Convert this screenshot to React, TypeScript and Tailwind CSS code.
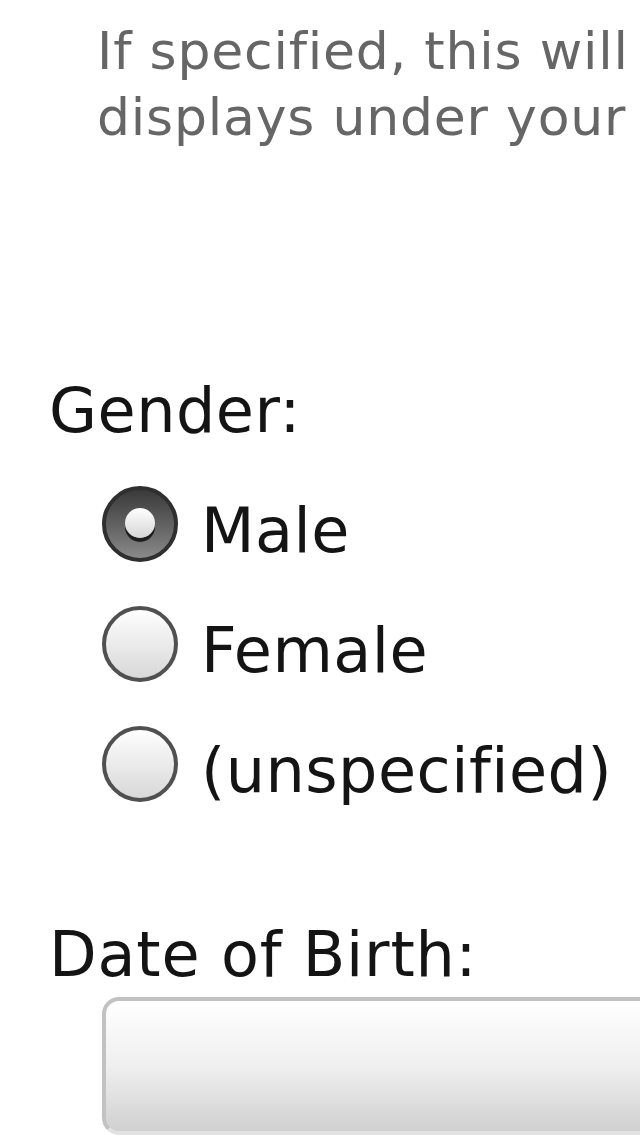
import React from "react";

const font = { fontFamily: '"DejaVu Sans", Verdana, sans-serif' };

function Radio({ checked }: { checked?: boolean }) {
  if (checked) {
    return (
      <div className="flex h-[76px] w-[76px] shrink-0 items-center justify-center rounded-full border-4 border-[#2f2f2f] bg-linear-to-b from-[#3a3a3a] to-[#8a8a8a]">
        <div className="mb-[2px] h-[30px] w-[30px] rounded-full bg-linear-to-b from-[#ffffff] to-[#d6d6d6] shadow-[0_4px_0_#1e1e1e]" />
      </div>
    );
  }
  return (
    <div className="h-[76px] w-[76px] shrink-0 rounded-full border-4 border-[#505050] bg-linear-to-b from-[#fefefe] to-[#d8d8d8]" />
  );
}

function Row({ label, checked }: { label: string; checked?: boolean }) {
  return (
    <div className="flex h-[120px] items-center pl-[102px]">
      <Radio checked={checked} />
      <span className="ml-[23px] mt-[13px] whitespace-nowrap text-[62px] leading-[72px] tracking-[0.5px] text-[#141414]">
        {label}
      </span>
    </div>
  );
}

export default function App() {
  return (
    <div className="relative h-[1136px] w-[640px] overflow-hidden bg-white" style={font}>
      <div className="pl-[97px] pt-[18px] text-[52px] leading-[66px] tracking-[0.8px] text-[#666666]">
        <div className="whitespace-nowrap">If specified, this will</div>
        <div className="whitespace-nowrap">displays under your</div>
      </div>

      <div className="mt-[225px] pl-[49px] text-[62px] leading-[72px] tracking-[0.5px] text-[#141414]">Gender:</div>

      <div className="mt-[17px] flex flex-col">
        <Row label="Male" checked />
        <Row label="Female" />
        <Row label="(unspecified)" />
      </div>

      <div className="mt-[95px] pl-[49px] text-[62px] leading-[72px] tracking-[0.8px] text-[#141414]">Date of Birth:</div>

      <div className="ml-[102px] mt-[6px] h-[138px] w-[700px] rounded-[17px] border-4 border-[#c2c2c2] border-b-[#e2e2e2] bg-linear-to-b from-[#ffffff] via-[#efefef] to-[#d0d0d0]" />
    </div>
  );
}
